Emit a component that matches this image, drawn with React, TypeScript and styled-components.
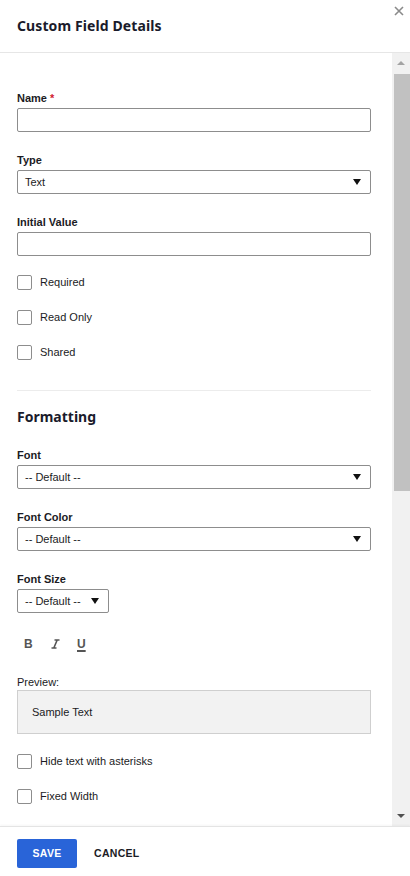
import React from "react";
import styled, { createGlobalStyle } from "styled-components";

const Global = createGlobalStyle`
  html, body { margin: 0; padding: 0; background: #fff; }
  body { font-family: "Liberation Sans", Arial, sans-serif; color: #1b1b24; }
  * { box-sizing: border-box; }
`;

const Panel = styled.div`
  width: 410px;
  height: 876px;
  display: flex;
  flex-direction: column;
  background: #fff;
  overflow: hidden;
`;

const Header = styled.header`
  height: 53px;
  flex: none;
  display: flex;
  align-items: center;
  justify-content: space-between;
  padding: 0 0 1px 17px;
  border-bottom: 1px solid #e6e6e6;
  position: relative;
`;

const Title = styled.h1`
  margin: 0;
  font-family: "Noto Sans", "DejaVu Sans", sans-serif;
  font-weight: 700;
  font-size: 14px;
  letter-spacing: 0.1px;
  color: #1a1b2b;
`;

const Close = styled.button`
  position: absolute;
  top: 5px;
  right: 5px;
  width: 12px;
  height: 12px;
  padding: 0;
  border: none;
  background: none;
  display: flex;
  align-items: center;
  justify-content: center;
`;

const BodyRow = styled.div`
  flex: 1;
  display: flex;
  min-height: 0;
`;

const Content = styled.div`
  flex: 1;
  overflow: hidden;
  padding: 38px 21px 0 17px;
  display: flex;
  flex-direction: column;
`;

const Field = styled.div<{ $mb?: number }>`
  display: flex;
  flex-direction: column;
  margin-bottom: ${(p) => (p.$mb ?? 21)}px;
`;

const Label = styled.label`
  font-size: 11px;
  font-weight: 700;
  line-height: 14px;
  color: #1b1b24;
  margin-bottom: 3px;
`;

const Req = styled.span`
  color: #d0202e;
`;

const TextInput = styled.div`
  height: 24px;
  border: 1px solid #8d8d8d;
  border-radius: 2px;
  background: #fff;
`;

const Select = styled.div<{ $width?: number }>`
  height: 24px;
  width: ${(p) => (p.$width ? `${p.$width}px` : "100%")};
  border: 1px solid #8d8d8d;
  border-radius: 2px;
  background: #fff;
  display: flex;
  align-items: center;
  justify-content: space-between;
  padding: 0 9px 0 7px;
  font-size: 11px;
  color: #1b1b24;
`;

const Caret = styled.span`
  width: 0;
  height: 0;
  border-left: 4px solid transparent;
  border-right: 4px solid transparent;
  border-top: 6px solid #111;
`;

const Checks = styled.div<{ $mt: number }>`
  display: flex;
  flex-direction: column;
  gap: 20px;
  margin-top: ${(p) => p.$mt}px;
`;

const CheckRow = styled.div`
  display: flex;
  align-items: center;
  height: 15px;
  line-height: 15px;
  gap: 8px;
  font-size: 11px;
  color: #1b1b24;
`;

const Box = styled.span`
  width: 15px;
  height: 15px;
  border: 1px solid #8d8d8d;
  border-radius: 2px;
  background: #fff;
  flex: none;
`;

const Divider = styled.hr`
  border: none;
  border-top: 1px solid #ececec;
  margin: 30px 0 0;
`;

const SectionTitle = styled.h2`
  margin: 16px 0 21px;
  font-family: "Noto Sans", "DejaVu Sans", sans-serif;
  font-weight: 700;
  font-size: 14px;
  line-height: 20px;
  color: #1a1b2b;
`;

const StyleBar = styled.div`
  display: flex;
  align-items: center;
  height: 20px;
  margin-top: 21px;
  padding-left: 7px;
`;

const StyleBtn = styled.span<{ $kind: "b" | "i" | "u" }>`
  width: ${(p) => (p.$kind === "b" ? 27 : 26)}px;
  font-size: 12px;
  color: #555;
  font-family: "Liberation Sans", Arial, sans-serif;
  font-weight: 700;
  text-decoration: ${(p) => (p.$kind === "u" ? "underline" : "none")};
  text-underline-offset: 2px;
  text-decoration-thickness: 1.5px;
`;

const ItalicIcon = styled.svg`
  display: block;
`;

const PreviewLabel = styled.div`
  margin-top: 21px;
  font-size: 11px;
  line-height: 14px;
  color: #1b1b24;
  margin-bottom: 1px;
`;

const PreviewBox = styled.div`
  height: 44px;
  background: #f2f2f2;
  border: 1px solid #cfcfcf;
  display: flex;
  align-items: center;
  padding-left: 14px;
  font-size: 11px;
  color: #1b1b24;
`;

const ScrollBar = styled.div`
  width: 18px;
  flex: none;
  background: #f1f1f1;
  display: flex;
  flex-direction: column;
`;

const ScrollBtn = styled.div`
  height: 20px;
  display: flex;
  align-items: center;
  justify-content: center;
  flex: none;
`;

const Thumb = styled.div`
  height: 417px;
  margin: 1px 0 0 2px;
  background: #c1c1c1;
  flex: none;
`;

const Track = styled.div`
  flex: 1;
`;

const Arrow = styled.span<{ $up?: boolean }>`
  width: 0;
  height: 0;
  border-left: 4px solid transparent;
  border-right: 4px solid transparent;
  ${(p) => (p.$up ? "border-bottom: 4px solid #a3a3a3;" : "border-top: 4px solid #505050;")}
`;

const Footer = styled.footer`
  height: 50px;
  flex: none;
  border-top: 1px solid #e4e4e4;
  box-shadow: 0 -1px 2px rgba(0, 0, 0, 0.04);
  display: flex;
  align-items: center;
  padding: 0 0 0 17px;
  gap: 17px;
`;

const Button = styled.button<{ $primary?: boolean }>`
  height: 29px;
  width: ${(p) => (p.$primary ? "60px" : "auto")};
  padding: 0;
  border: none;
  border-radius: 2px;
  background: ${(p) => (p.$primary ? "#2964d8" : "transparent")};
  color: ${(p) => (p.$primary ? "#fff" : "#1b1b24")};
  font-family: "Liberation Sans", Arial, sans-serif;
  font-weight: 700;
  font-size: 10.5px;
  letter-spacing: 0.3px;
  margin-top: 3px;
`;

export default function App() {
  return (
    <>
      <Global />
      <Panel>
        <Header>
          <Title>Custom Field Details</Title>
          <Close aria-label="Close">
            <svg width="10" height="10" viewBox="0 0 10 10">
              <path d="M1 1 L9 9 M9 1 L1 9" stroke="#8a8a8a" strokeWidth="1.6" />
            </svg>
          </Close>
        </Header>
        <BodyRow>
          <Content>
            <Field>
              <Label>
                Name <Req>*</Req>
              </Label>
              <TextInput />
            </Field>
            <Field>
              <Label>Type</Label>
              <Select>
                <span>Text</span>
                <Caret />
              </Select>
            </Field>
            <Field $mb={0}>
              <Label>Initial Value</Label>
              <TextInput />
            </Field>
            <Checks $mt={19}>
              <CheckRow>
                <Box />
                Required
              </CheckRow>
              <CheckRow>
                <Box />
                Read Only
              </CheckRow>
              <CheckRow>
                <Box />
                Shared
              </CheckRow>
            </Checks>
            <Divider />
            <SectionTitle>Formatting</SectionTitle>
            <Field>
              <Label>Font</Label>
              <Select>
                <span>-- Default --</span>
                <Caret />
              </Select>
            </Field>
            <Field>
              <Label>Font Color</Label>
              <Select>
                <span>-- Default --</span>
                <Caret />
              </Select>
            </Field>
            <Field $mb={0}>
              <Label>Font Size</Label>
              <Select $width={92}>
                <span>-- Default --</span>
                <Caret />
              </Select>
            </Field>
            <StyleBar>
              <StyleBtn $kind="b">B</StyleBtn>
              <StyleBtn $kind="i">
                <ItalicIcon width="9" height="10" viewBox="0 0 9 10" aria-label="Italic">
                  <path d="M3.5 1 H8.5 M0.5 9 H5.5 M6.2 1 L2.8 9" stroke="#555" strokeWidth="1.6" fill="none" />
                </ItalicIcon>
              </StyleBtn>
              <StyleBtn $kind="u">U</StyleBtn>
            </StyleBar>
            <PreviewLabel>Preview:</PreviewLabel>
            <PreviewBox>Sample Text</PreviewBox>
            <Checks $mt={20}>
              <CheckRow>
                <Box />
                Hide text with asterisks
              </CheckRow>
              <CheckRow>
                <Box />
                Fixed Width
              </CheckRow>
            </Checks>
          </Content>
          <ScrollBar>
            <ScrollBtn>
              <Arrow $up />
            </ScrollBtn>
            <Thumb />
            <Track />
            <ScrollBtn>
              <Arrow />
            </ScrollBtn>
          </ScrollBar>
        </BodyRow>
        <Footer>
          <Button $primary>SAVE</Button>
          <Button>CANCEL</Button>
        </Footer>
      </Panel>
    </>
  );
}
